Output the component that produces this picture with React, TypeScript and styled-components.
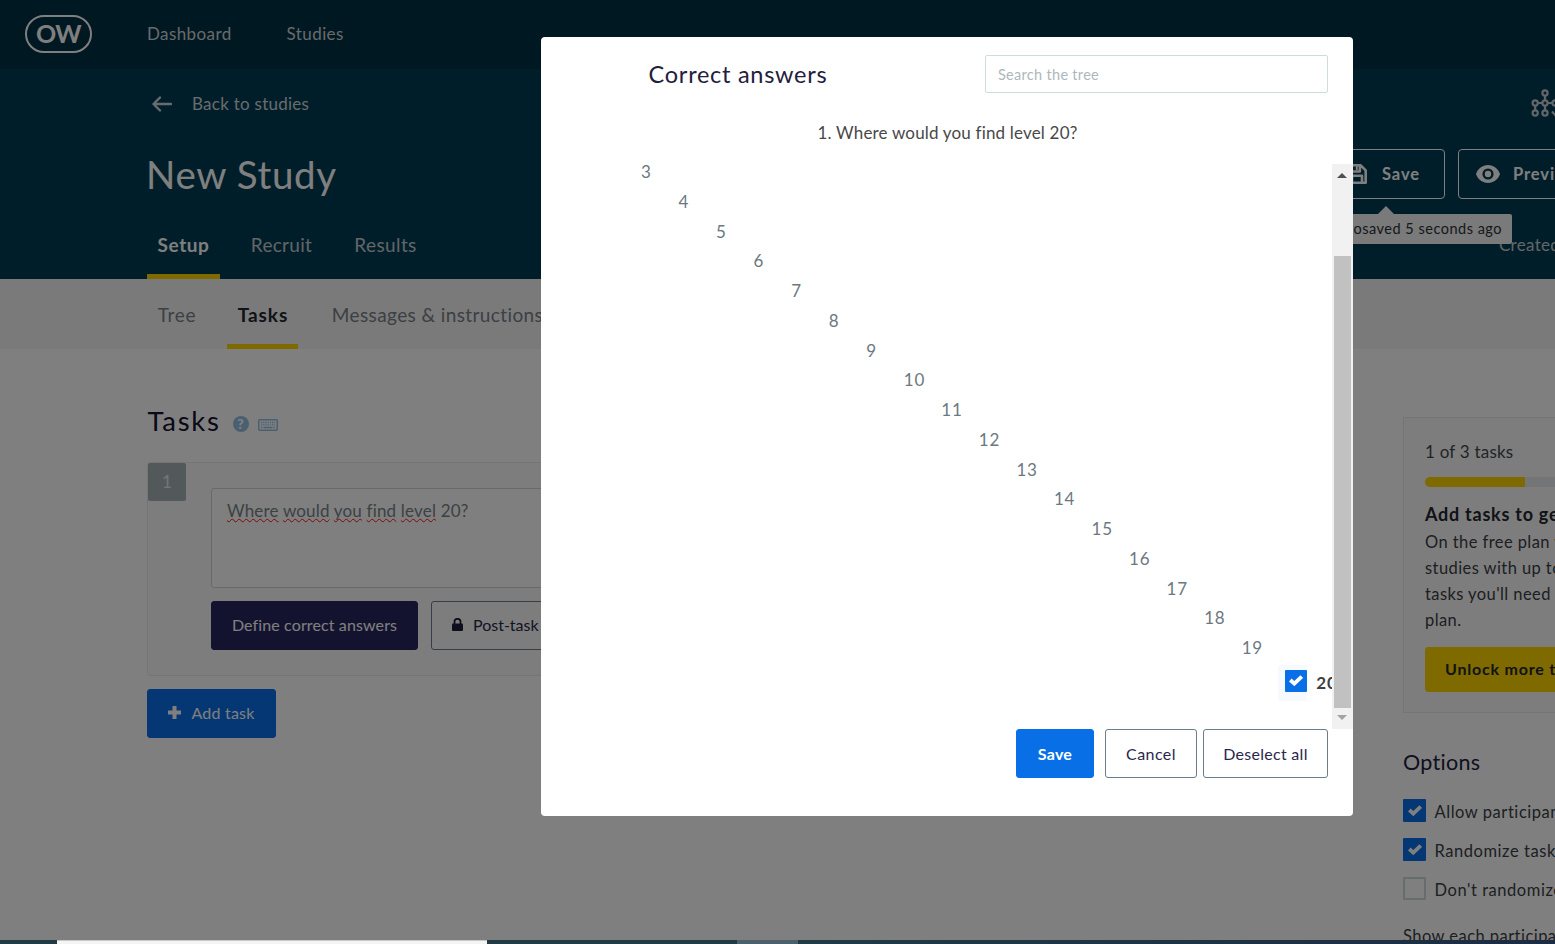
import React from "react";
import styled, { createGlobalStyle } from "styled-components";

const GlobalStyle = createGlobalStyle`
  *, *::before, *::after { box-sizing: border-box; }
  html, body { margin: 0; padding: 0; overflow: hidden; }
  body { font-family: Lato, "Liberation Sans", sans-serif; background: #fff; }
  h1, h2, h3, p, ul, li { margin: 0; padding: 0; font-weight: 400; list-style: none; }
`;

const Screen = styled.div`
  position: relative;
  width: 1555px;
  height: 944px;
  overflow: hidden;
  display: flex;
  flex-direction: column;
  white-space: nowrap;
`;

const Page = styled.div`
  height: 940px;
  overflow: hidden;
`;

/* ---------- top navigation ---------- */

const TopNav = styled.nav`
  height: 69px;
  background: #003042;
  display: flex;
  align-items: flex-start;
  padding: 15px 0 0 25px;
`;

const Logo = styled.div`
  width: 67px;
  height: 38px;
  border: 2px solid #fff;
  border-radius: 19px;
  margin-right: 55px;
  color: #fff;
  font-size: 25px;
  font-weight: 700;
  line-height: 33px;
  text-align: center;
  letter-spacing: -0.6px;
`;

const NavLink = styled.a<{ $gap?: number }>`
  color: #ced6da;
  font-size: 17px;
  line-height: 37px;
  letter-spacing: 0.4px;
  margin-right: ${(p) => p.$gap ?? 0}px;
`;

/* ---------- study header ---------- */

const StudyHeader = styled.header`
  height: 210px;
  background: #003c54;
  padding-left: 147px;
  overflow: hidden;
`;

const HeaderRow = styled.div<{ $height: number; $left: number }>`
  display: grid;
  grid-template-columns: ${(p) => p.$left}px max-content;
  height: ${(p) => p.$height}px;
  align-items: center;
`;

const BackLink = styled.a`
  display: flex;
  align-items: center;
  gap: 20px;
  padding-left: 5px;
  color: #d0d8dc;
  font-size: 17px;
  line-height: 24px;
  letter-spacing: 0.26px;
`;

const StudyTitle = styled.h1`
  color: #fff;
  font-size: 38.5px;
  line-height: 50px;
  letter-spacing: 0.65px;
  margin-left: -1px;
`;

const HeaderActions = styled.div`
  display: flex;
  gap: 13px;
`;

const OutlineAction = styled.button<{ $width: number; $pad: number; $gap: number }>`
  width: ${(p) => p.$width}px;
  height: 50px;
  padding: 0 0 0 ${(p) => p.$pad}px;
  display: flex;
  align-items: center;
  gap: ${(p) => p.$gap}px;
  border: 1px solid #fff;
  border-radius: 4px;
  background: transparent;
  color: #fff;
  font: 700 16.5px/24px Lato, sans-serif;
  letter-spacing: 0.9px;
`;

const SavedAnchor = styled.div`
  position: relative;
  display: flex;
`;

const SavedTip = styled.div`
  position: absolute;
  z-index: 2;
  top: 65px;
  right: -67px;
  height: 30px;
  padding: 0 10px;
  border-radius: 2px;
  background: #f4f4f4;
  color: #2b3036;
  font-size: 14.5px;
  line-height: 30px;
  letter-spacing: 0.5px;
  &::before {
    content: "";
    position: absolute;
    top: -8px;
    right: 118px;
    border: 8px solid transparent;
    border-top-width: 0;
    border-bottom-color: #f4f4f4;
  }
`;

const Created = styled.span`
  padding: 2px 0 0 1px;
  color: #c4ccd0;
  font-size: 17px;
  line-height: 24px;
  letter-spacing: 0.3px;
`;

const Tabs = styled.div`
  display: flex;
  height: 100%;
`;

const Tab = styled.a<{ $width: number; $active?: boolean; $dark?: boolean; $ls?: number; $shift?: number }>`
  width: ${(p) => p.$width}px;
  flex: none;
  height: 100%;
  padding-top: 22px;
  padding-left: ${(p) => p.$shift ?? 0}px;
  text-align: center;
  font-size: 19px;
  line-height: 27px;
  font-weight: ${(p) => (p.$active ? 700 : 400)};
  letter-spacing: ${(p) => p.$ls ?? 0.4}px;
  color: ${(p) => (p.$dark ? (p.$active ? "#22262e" : "#78808a") : p.$active ? "#fff" : "#c4ccd0")};
  border-bottom: 5px solid ${(p) => (p.$active ? "#ffd500" : "transparent")};
`;

const SubNav = styled.div`
  height: 70px;
  padding-left: 147px;
  background: #f4f4f4;
  display: flex;
`;

/* ---------- body ---------- */

const Body = styled.main`
  display: grid;
  grid-template-columns: 1256px 320px;
  padding-left: 147px;
`;

const TasksColumn = styled.section`
  padding-top: 55px;
`;

const HeadingRow = styled.div`
  display: flex;
  align-items: center;
  height: 34px;
  margin-bottom: 24px;
`;

const SectionHeading = styled.h2`
  color: #14122e;
  font-size: 27.5px;
  line-height: 34px;
  letter-spacing: 1.7px;
  padding-left: 0.5px;
`;

const TaskCard = styled.div`
  width: 1200px;
  height: 214px;
  border: 1px solid #ebebeb;
  border-radius: 3px;
  background: #fbfbfb;
  display: flex;
  gap: 25px;
`;

const TaskNumber = styled.div`
  width: 38px;
  height: 38px;
  background: #a6b2b6;
  color: #e8ecee;
  border-radius: 2px;
  font-size: 17px;
  line-height: 37px;
  text-align: center;
`;

const TaskBody = styled.div`
  padding-top: 25px;
  flex: 1;
`;

const TaskInput = styled.div`
  height: 100px;
  margin-bottom: 13px;
  border: 1px solid #cfd3d4;
  border-radius: 3px;
  background: #fff;
  padding: 9px 15px;
  color: #788488;
  font-size: 17px;
  line-height: 25px;
  letter-spacing: 0.18px;
`;

const Misspelled = styled.span`
  text-decoration: underline wavy #ff1414 1.4px;
  text-underline-offset: 1px;
  text-decoration-skip-ink: none;
`;

const ButtonRow = styled.div<{ $gap: number }>`
  display: flex;
  gap: ${(p) => p.$gap}px;
`;

type ButtonKind = "primary" | "navy" | "outline" | "yellow";

const palettes: Record<ButtonKind, { bg: string; fg: string; line: string }> = {
  primary: { bg: "#086fe6", fg: "#fff", line: "#086fe6" },
  navy: { bg: "#29265f", fg: "#fff", line: "#29265f" },
  outline: { bg: "transparent", fg: "#29274d", line: "#6b7c8a" },
  yellow: { bg: "#ffd500", fg: "#22262e", line: "#ffd500" },
};

const Button = styled.button<{ $kind: ButtonKind; $width: number; $height?: number; $bold?: boolean; $ls?: number; $left?: number; $lift?: number }>`
  flex: none;
  width: ${(p) => p.$width}px;
  height: ${(p) => p.$height ?? 49}px;
  padding: 0 0 ${(p) => p.$lift ?? 0}px ${(p) => p.$left ?? 0}px;
  display: flex;
  align-items: center;
  justify-content: ${(p) => (p.$left ? "flex-start" : "center")};
  gap: 10px;
  border: 1px solid ${(p) => palettes[p.$kind].line};
  border-radius: 3px;
  background: ${(p) => palettes[p.$kind].bg};
  color: ${(p) => palettes[p.$kind].fg};
  font-family: Lato, sans-serif;
  font-size: 16px;
  font-weight: ${(p) => (p.$bold ? 700 : 400)};
  letter-spacing: ${(p) => p.$ls ?? 0.2}px;
`;

const AddTask = styled.div`
  margin-top: 13px;
`;

/* ---------- sidebar ---------- */

const Sidebar = styled.aside`
  padding-top: 68px;
`;

const PlanCard = styled.div`
  height: 296px;
  border: 1px solid #ebebeb;
  background: #fbfbfb;
  padding: 21px 21px 0;
`;

const PlanCount = styled.p`
  color: #44484e;
  font-size: 17px;
  line-height: 25px;
  letter-spacing: 0.22px;
  margin-bottom: 13px;
`;

const Progress = styled.div`
  height: 10px;
  border-radius: 5px;
  background: #e8eaec;
  overflow: hidden;
  margin-bottom: 14px;
  &::before {
    content: "";
    display: block;
    width: 100px;
    height: 10px;
    background: #ffd500;
  }
`;

const PlanTitle = styled.h3`
  color: #22262e;
  font-size: 18px;
  font-weight: 700;
  line-height: 26px;
  letter-spacing: 0.75px;
  margin-bottom: 2px;
`;

const PlanText = styled.p`
  color: #3a3e44;
  font-size: 16.5px;
  line-height: 26px;
  letter-spacing: 0.42px;
  margin-bottom: 14px;
`;

const OptionsHeading = styled.h2`
  margin: 35px 0 23px;
  color: #22203c;
  font-size: 21.5px;
  line-height: 28px;
  letter-spacing: 0.3px;
`;

const Option = styled.label`
  display: flex;
  height: 39px;
  align-items: flex-start;
  gap: 8.5px;
  color: #3a3e44;
  font-size: 16.5px;
  line-height: 27px;
  letter-spacing: 0.55px;
`;

const Box = styled.span<{ $checked?: boolean; $size?: number }>`
  flex: none;
  width: ${(p) => p.$size ?? 23}px;
  height: ${(p) => p.$size ?? 23}px;
  display: grid;
  place-items: center;
  border: ${(p) => (p.$checked ? "0" : "2px solid #cfd8d8")};
  border-radius: 1px;
  background: ${(p) => (p.$checked ? "#086fe6" : "transparent")};
`;

const ShowEach = styled.p`
  margin-top: 7px;
  color: #3a3e44;
  font-size: 16.5px;
  line-height: 26px;
  letter-spacing: 0.45px;
`;

/* ---------- modal ---------- */

const Overlay = styled.div`
  position: absolute;
  inset: 0 0 4px 0;
  z-index: 5;
  background: rgba(0, 0, 0, 0.5);
`;

const Modal = styled.div`
  position: absolute;
  z-index: 6;
  left: 541px;
  top: 37px;
  width: 812px;
  height: 779px;
  border-radius: 4px;
  background: #fff;
`;

const ModalHeader = styled.div`
  display: flex;
  justify-content: space-between;
  padding: 18px 25px 0 107.6px;
  height: 56px;
`;

const ModalTitle = styled.h2`
  color: #22203c;
  font-size: 23.5px;
  line-height: 38px;
  letter-spacing: 0.73px;
`;

const Search = styled.input`
  width: 343px;
  height: 38px;
  padding: 1px 12px 0;
  border: 1px solid #cfdcdc;
  border-radius: 2px;
  background: #fff;
  font: 14.5px Lato, sans-serif;
  letter-spacing: 0.3px;
  outline: none;
  &::placeholder { color: #adb8bc; opacity: 1; }
`;

const Question = styled.p`
  margin-top: 26px;
  padding-left: 1px;
  color: #484848;
  font-size: 17px;
  line-height: 27px;
  letter-spacing: 0.18px;
  text-align: center;
`;

const TreeArea = styled.div`
  margin-top: 18px;
  height: 565px;
  display: flex;
`;

const TreeClip = styled.div`
  width: 791px;
  overflow: hidden;
  padding-left: 62.4px;
`;

const Branch = styled.ul`
  padding-left: 37.55px;
`;

const NodeLabel = styled.div`
  height: 29.75px;
  line-height: 16px;
  font-size: 17px;
  letter-spacing: 0.8px;
  color: #6c7880;
`;

const SelectedNode = styled.div`
  display: flex;
  margin: -5px 0 0 -1px;
  color: #404040;
  font-size: 17px;
  font-weight: 700;
  line-height: 36px;
  letter-spacing: 0.8px;
`;

const Highlight = styled.span`
  width: 29px;
  height: 36px;
  padding: 5px 0 0 7px;
  margin-right: 9px;
  border-radius: 3px 0 0 3px;
  background: #f6faff;
`;

const Scrollbar = styled.div`
  width: 21px;
  padding: 9px 2px 9px;
  background: #f1f1f1;
  display: flex;
  flex-direction: column;
  align-items: center;
`;

const Arrow = styled.span<{ $down?: boolean }>`
  border: 5px solid transparent;
  border-top: ${(p) => (p.$down ? "5px solid #a3a3a3" : "0")};
  border-bottom: ${(p) => (p.$down ? "0" : "5px solid #505050")};
  margin-left: -1px;
`;

const Thumb = styled.div`
  width: 17px;
  height: 452px;
  margin: 78px 0 7px;
  background: #c1c1c1;
`;

const ModalFooter = styled.div`
  display: flex;
  justify-content: flex-end;
  padding-right: 25px;
  & > :first-child { margin-right: 11px; }
  & > :nth-child(2) { margin-right: 6px; }
`;

/* ---------- desktop strip ---------- */

const Taskbar = styled.div`
  height: 4px;
  display: grid;
  grid-template-columns: 57px 430px 250px 61px 1fr;
  background: linear-gradient(90deg, #203a46 0, #203a46 800px, #1c2c42 1555px);
`;

const TaskbarItem = styled.span<{ $col: number; $light?: boolean }>`
  grid-column: ${(p) => p.$col};
  background: ${(p) => (p.$light ? "#f4f4f4" : "#4d616d")};
  border-top: ${(p) => (p.$light ? "1px solid #c8c8c8" : "0")};
`;

/* ---------- icons ---------- */

const ArrowLeft = () => (
  <svg width="20" height="16" viewBox="0 0 20 16" fill="none" stroke="#d0d8dc" strokeWidth="2.4" strokeLinecap="round" strokeLinejoin="round">
    <path d="M19 8H1.8M8 1.500 1.500 8 8 14.500" />
  </svg>
);

const Hierarchy = () => (
  <svg width="30" height="30" viewBox="0 0 30 30" fill="none" stroke="#c4ccd0" strokeWidth="2.2">
    <circle cx="14" cy="4" r="2.600" />
    <circle cx="4.200" cy="14" r="2.600" />
    <circle cx="14" cy="14" r="2.600" />
    <circle cx="24" cy="14" r="2.600" />
    <circle cx="4.200" cy="24" r="2.600" />
    <circle cx="14" cy="24" r="2.600" />
    <path d="M14 6.600v4.800M6.800 14h4.600M16.600 14h4.800M4.200 16.600v4.800M14 16.600v4.800M21 22.500l4 4.500" />
  </svg>
);

const Floppy = () => (
  <svg width="20" height="20" viewBox="0 0 20 20" fill="none" stroke="#fff" strokeWidth="2.600" strokeLinejoin="round">
    <path d="M1.300 1.300h12.400l5 5v12.400H1.300zM4.800 1.300v6.200h8V1.300M5 18.700v-7h10v7" />
    <path d="M9.800 2v4" strokeWidth="2" />
  </svg>
);

const Eye = () => (
  <svg width="24" height="18" viewBox="0 0 24 18">
    <path fill="#fff" fillRule="evenodd" d="M12 0C6.500 0 1.900 3.700 0 9c1.900 5.300 6.500 9 12 9s10.100-3.700 12-9c-1.900-5.300-6.500-9-12-9Zm0 14.600a5.600 5.600 0 1 1 0-11.200 5.600 5.600 0 0 1 0 11.200Z" />
    <circle cx="12" cy="9" r="3.200" fill="#fff" />
  </svg>
);

const HelpIcon = styled.span`
  width: 16px;
  height: 16px;
  margin: 6px 9px 0 12px;
  border-radius: 50%;
  background: #94c0e0;
  color: #fff;
  font-size: 14px;
  font-weight: 900;
  line-height: 16px;
  text-align: center;
`;

const KeyboardMark = styled.svg`
  margin-top: 7px;
`;

const Keyboard = () => (
  <KeyboardMark width="20" height="12" viewBox="0 0 20 12" fill="none" stroke="#94c0e0">
    <rect x=".75" y=".75" width="18.500" height="10.500" rx="1" strokeWidth="1.500" />
    <path d="M3 3.500h14M3 5.800h14" strokeWidth="1.300" strokeDasharray="1.300 .9" />
    <path d="M3 8.500h1.500M5.500 8.500h9M15.500 8.500H17" strokeWidth="1.400" />
  </KeyboardMark>
);

const Lock = () => (
  <svg width="11" height="13" viewBox="0 0 11 13">
    <rect x="0" y="5.500" width="11" height="7.500" rx="1" fill="#1f1d3c" />
    <path d="M2.500 6V3.800a3 3 0 0 1 6 0V6" fill="none" stroke="#1f1d3c" strokeWidth="1.800" />
  </svg>
);

const Plus = () => (
  <svg width="13" height="13" viewBox="0 0 13 13">
    <path d="M6.500 0v13M0 6.500h13" stroke="#fff" strokeWidth="4" />
  </svg>
);

const Check = () => (
  <svg width="14" height="11" viewBox="0 0 14 11" fill="none" stroke="#fff" strokeWidth="3.800">
    <path d="M1.300 5 5.300 8.600 12.700 1.500" />
  </svg>
);

/* ---------- content ---------- */

const TreeNode = ({ level }: { level: number }) => (
  <Branch>
    <li>
      {level === 20 ? (
        <SelectedNode>
          <Highlight>
            <Box $checked $size={22}>
              <Check />
            </Box>
          </Highlight>
          20
        </SelectedNode>
      ) : (
        <>
          <NodeLabel>{level}</NodeLabel>
          <TreeNode level={level + 1} />
        </>
      )}
    </li>
  </Branch>
);

const promptWords = ["Where", "would", "you", "find", "level"];

export default function App() {
  return (
    <>
      <GlobalStyle />
      <Screen>
        <Page>
          <TopNav>
            <Logo>OW</Logo>
            <NavLink $gap={55}>Dashboard</NavLink>
            <NavLink>Studies</NavLink>
          </TopNav>

          <StudyHeader>
            <HeaderRow $height={70} $left={1384}>
              <BackLink>
                <ArrowLeft />
                Back to studies
              </BackLink>
              <Hierarchy />
            </HeaderRow>
            <HeaderRow $height={70} $left={1178}>
              <StudyTitle>New Study</StudyTitle>
              <HeaderActions>
                <SavedAnchor>
                  <OutlineAction $width={120} $pad={21} $gap={15}>
                    <Floppy />
                    Save
                  </OutlineAction>
                  <SavedTip>Autosaved 5 seconds ago</SavedTip>
                </SavedAnchor>
                <OutlineAction $width={130} $pad={17} $gap={13}>
                  <Eye />
                  Preview
                </OutlineAction>
              </HeaderActions>
            </HeaderRow>
            <HeaderRow $height={70} $left={1351}>
              <Tabs>
                <Tab $width={73} $active $ls={0.6}>Setup</Tab>
                <Tab $width={122} $shift={1} $ls={0.3}>Recruit</Tab>
                <Tab $width={86} $shift={1}>Results</Tab>
              </Tabs>
              <Created>Created 5 minutes ago</Created>
            </HeaderRow>
          </StudyHeader>

          <SubNav>
            <Tab $dark $width={80} $shift={0} $ls={0.7}>
              <TreeTabLabel>Tree</TreeTabLabel>
            </Tab>
            <Tab $dark $active $width={71} $ls={0.9} $shift={1}>Tasks</Tab>
            <Tab $dark $width={279} $ls={0.4}>Messages &amp; instructions</Tab>
          </SubNav>

          <Body>
            <TasksColumn>
              <HeadingRow>
                <SectionHeading>Tasks</SectionHeading>
                <HelpIcon>?</HelpIcon>
                <Keyboard />
              </HeadingRow>
              <TaskCard>
                <TaskNumber>1</TaskNumber>
                <TaskBody>
                  <TaskInput>
                    {promptWords.map((word) => (
                      <React.Fragment key={word}>
                        <Misspelled>{word}</Misspelled>{" "}
                      </React.Fragment>
                    ))}
                    20?
                  </TaskInput>
                  <ButtonRow $gap={13}>
                    <Button $kind="navy" $width={207} $ls={0.12} $lift={2}>Define correct answers</Button>
                    <Button $kind="outline" $width={240} $left={20} $ls={0} $lift={2}>
                      <Lock />
                      Post-task questions
                    </Button>
                  </ButtonRow>
                </TaskBody>
              </TaskCard>
              <AddTask>
                <Button $kind="primary" $width={129} $lift={2}>
                  <Plus />
                  Add task
                </Button>
              </AddTask>
            </TasksColumn>

            <Sidebar>
              <PlanCard>
                <PlanCount>1 of 3 tasks</PlanCount>
                <Progress />
                <PlanTitle>Add tasks to get more</PlanTitle>
                <PlanText>
                  On the free plan you can run
                  <br />
                  studies with up to three. For
                  <br />
                  tasks you'll need to upgrade
                  <br />
                  plan.
                </PlanText>
                <Button $kind="yellow" $width={240} $height={45} $left={19} $bold $ls={0.8} $lift={2}>
                  Unlock more tasks
                </Button>
              </PlanCard>
              <OptionsHeading>Options</OptionsHeading>
              <Option>
                <Box $checked>
                  <Check />
                </Box>
                Allow participants to skip
              </Option>
              <Option>
                <Box $checked>
                  <Check />
                </Box>
                Randomize task order
              </Option>
              <Option>
                <Box />
                Don't randomize the first
              </Option>
              <ShowEach>Show each participant</ShowEach>
            </Sidebar>
          </Body>
        </Page>

        <Taskbar>
          <TaskbarItem $col={2} $light />
          <TaskbarItem $col={4} />
        </Taskbar>

        <Overlay />
        <Modal>
          <ModalHeader>
            <ModalTitle>Correct answers</ModalTitle>
            <Search placeholder="Search the tree" />
          </ModalHeader>
          <Question>1. Where would you find level 20?</Question>
          <TreeArea>
            <TreeClip>
              <TreeNode level={3} />
            </TreeClip>
            <Scrollbar>
              <Arrow />
              <Thumb />
              <Arrow $down />
            </Scrollbar>
          </TreeArea>
          <ModalFooter>
            <Button $kind="primary" $width={78} $bold $ls={0.25}>Save</Button>
            <Button $kind="outline" $width={92} $ls={0.45}>Cancel</Button>
            <Button $kind="outline" $width={125} $ls={0.28}>Deselect all</Button>
          </ModalFooter>
        </Modal>
      </Screen>
    </>
  );
}

const TreeTabLabel = styled.span`
  display: block;
  width: 60px;
`;
